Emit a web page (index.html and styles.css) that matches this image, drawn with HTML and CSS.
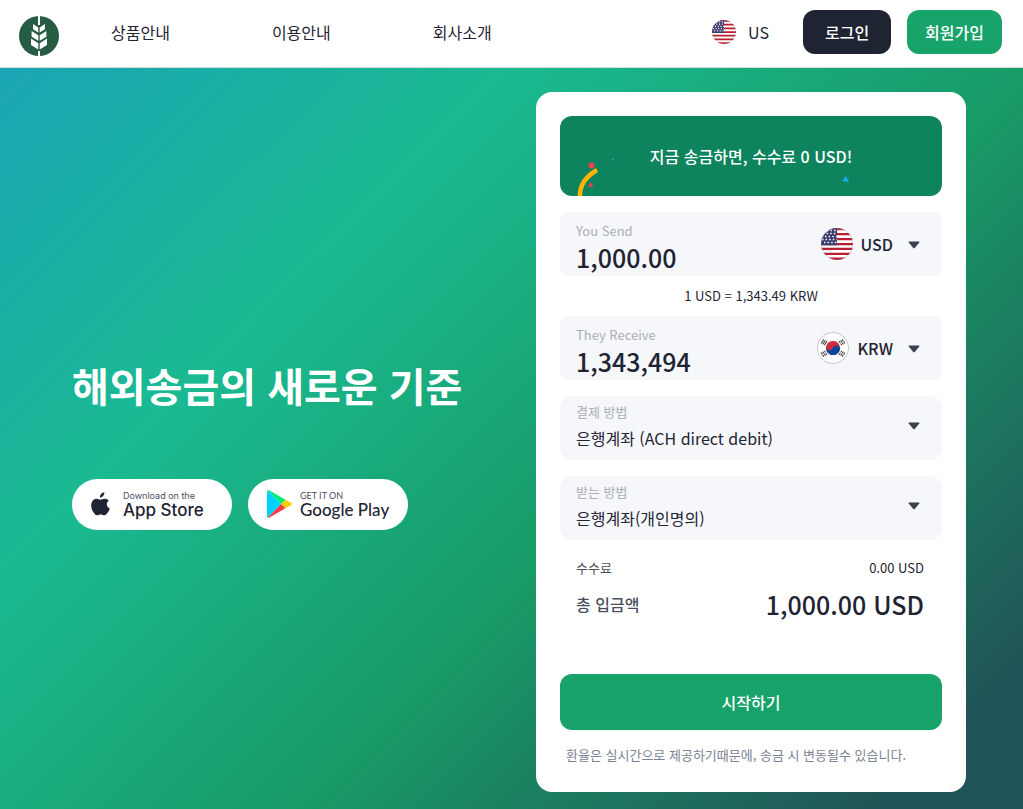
FILE: index.html
```html
<!DOCTYPE html>
<html lang="ko">
<head>
<meta charset="utf-8">
<meta name="viewport" content="width=device-width, initial-scale=1">
<title>해외송금의 새로운 기준</title>
<link rel="stylesheet" href="styles.css">
</head>
<body>
<svg class="defs" width="0" height="0" aria-hidden="true">
  <defs>
    <clipPath id="round"><circle cx="16" cy="16" r="16"/></clipPath>
    <symbol id="flag-us" viewBox="0 0 32 32">
      <g clip-path="url(#round)">
        <path fill="#fff" d="M0 0h32v32H0z"/>
        <path fill="#b9202f" d="M0 0h32v2.2H0zM0 5h32v2.3H0zM0 10h32v2.2H0zM0 14.9h32v2.3H0zM0 19.8h32v2.3H0zM0 24.7h32V27H0zM0 29.6h32V32H0z"/>
        <path fill="#3c3b6e" d="M0 0h16v17.2H0z"/>
        <path d="M6 2.5h10M2 5.5h14M4 8.5h12M1 11.5h15M3 14.5h13" stroke="#fff" stroke-width="1.4" stroke-dasharray="1.5 2.1"/>
      </g>
      <circle cx="16" cy="16" r="15.7" fill="none" stroke="#8d8d9b" stroke-opacity=".5" stroke-width=".6"/>
    </symbol>
    <symbol id="flag-kr" viewBox="0 0 32 32">
      <circle cx="16" cy="16" r="15.6" fill="#fff" stroke="#bcbcc0" stroke-width=".8"/>
      <g transform="rotate(20 16 16)">
        <circle cx="16" cy="16" r="7.1" fill="#cd2e3a"/>
        <path fill="#0047a0" d="M8.9 16a3.55 3.55 0 0 0 7.1 0 3.55 3.55 0 0 1 7.1 0 7.1 7.1 0 0 1-14.2 0z"/>
      </g>
      <g stroke="#444" stroke-width="1.1">
        <path d="M4 11.5l2.8-4.2M5.6 12.4l2.8-4.2M7.2 13.3L10 9.1"/>
        <path d="M28 11.5l-2.8-4.2M26.4 12.4l-2.8-4.2M24.8 13.3L22 9.1" stroke-dasharray="2.2 .6"/>
        <path d="M4 20.5l2.8 4.2M5.6 19.6l2.8 4.2M7.2 18.7l2.8 4.2" stroke-dasharray="2.2 .6"/>
        <path d="M28 20.5l-2.8 4.2M26.4 19.6l-2.8 4.2M24.8 18.7L22 22.9" stroke-dasharray="2.2 .6"/>
      </g>
    </symbol>
    <symbol id="caret" viewBox="0 0 12 8"><path fill="#3b404d" d="M1.2.5h9.6q1.2 0 .5 1L6.7 7q-.7.8-1.4 0L.7 1.5Q0 .5 1.2.5z"/></symbol>
  </defs>
</svg>

<header class="header">
  <a class="logo" href="#" aria-label="홈">
    <svg width="40" height="40" viewBox="0 0 40 40" aria-hidden="true">
      <circle cx="20" cy="20" r="20" fill="#265c43"/>
      <path fill="#fff" d="M19 0h2v9h-2zM19 35h2v5h-2z"/>
      <path fill="#fff" d="M19.3 16.5l-5.2-3.2V8l5.2 3.5zM20.7 16.5l5.2-3.2V8l-5.2 3.5zM19.3 24.7l-6.7-4V15l6.7 4.3zM20.7 24.7l6.7-4V15l-6.7 4.3zM19.3 33.5L12 29v-6.5l7.3 4.7zM20.7 33.5L28 29v-6.5l-7.3 4.7z"/>
    </svg>
  </a>
  <nav class="nav">
    <a href="#">상품안내</a>
    <a href="#">이용안내</a>
    <a href="#">회사소개</a>
  </nav>
  <div class="actions">
    <button class="country" type="button"><svg width="24" height="24" aria-hidden="true"><use href="#flag-us"/></svg>US</button>
    <button class="btn btn-dark" type="button">로그인</button>
    <button class="btn btn-green" type="button">회원가입</button>
  </div>
</header>

<main class="hero">
  <section class="intro">
    <h1>해외송금의 새로운 기준</h1>
    <div class="stores">
      <a class="store" href="#">
        <svg width="19" height="24" viewBox="0 0 19 24" aria-hidden="true"><path fill="#1f2433" d="M13.3.2c.2 1.5-.4 2.9-1.2 3.9-.8 1-2 1.6-3.1 1.5-.2-1.5.5-2.9 1.2-3.7.8-1 2.1-1.6 3.1-1.7zM17.9 8.800c-1.500 1-2.100 2.100-2.100 3.500 0 1.900 1.100 3.300 3 4.100-.5 1.500-1.200 2.900-2.100 4.200-.9 1.400-1.900 2.700-3.300 2.700-1.500 0-2-.8-3.700-.8s-2.300.8-3.600.8c-1.500 0-2.600-1.300-3.500-2.700C.3 17.500-.5 13.300.8 10.200 1.700 8.100 3.400 6.800 5.300 6.800c1.600 0 2.900.9 4 .9s2.600-1 4.500-1c1.600 0 3.100.6 4.100 2.100z"/></svg>
        <span class="store-text store-apple"><small>Download on the</small><b>App Store</b></span>
      </a>
      <a class="store" href="#">
        <svg width="25" height="28" viewBox="0 0 25 28" aria-hidden="true">
          <path fill="#00d2ff" d="M.7.4Q0 .8 0 2v24q0 1.200.7 1.600L14.200 14z"/>
          <path fill="#00ee76" d="M.7.4Q1.500 0 2.500.6L18.500 9.700 14.200 14z"/>
          <path fill="#ff3a44" d="M.7 27.600q.8.400 1.800-.2l16-9.100L14.200 14z"/>
          <path fill="#ffce00" d="M18.500 9.700l5.400 3.100q2.100 1.200 0 2.400l-5.400 3.100L14.200 14z"/>
        </svg>
        <span class="store-text store-google"><small>GET IT ON</small><b>Google Play</b></span>
      </a>
    </div>
  </section>

  <form class="card">
    <div class="promo">
      <svg class="confetti" viewBox="0 0 382 80" aria-hidden="true">
        <path d="M20 82C19 70 25 61 37 54" fill="none" stroke="#ffb400" stroke-width="4.5"/>
        <circle cx="31.5" cy="49.5" r="3" fill="#ef4050"/>
        <path d="M30.5 66l3 4.500-5.500.5z" fill="#ef4050"/>
        <path d="M286 60l3 6-7-1z" fill="#1eaaf1"/>
        <circle cx="53" cy="43.5" r="1" fill="#2aa5c8"/>
        <circle cx="105" cy="51" r="1" fill="#70569c"/>
      </svg>
      <p>지금 송금하면, 수수료 0 USD!</p>
    </div>

    <div class="field">
      <div class="amount">
        <label for="send">You Send</label>
        <input id="send" type="text" inputmode="decimal" value="1,000.00">
      </div>
      <button class="currency" type="button"><svg width="32" height="32" aria-hidden="true"><use href="#flag-us"/></svg>USD<svg class="caret" width="12" height="8" aria-hidden="true"><use href="#caret"/></svg></button>
    </div>
    <p class="rate">1 USD = 1,343.49 KRW</p>
    <div class="field">
      <div class="amount">
        <label for="receive">They Receive</label>
        <input id="receive" type="text" inputmode="decimal" value="1,343,494">
      </div>
      <button class="currency" type="button"><svg width="32" height="32" aria-hidden="true"><use href="#flag-kr"/></svg>KRW<svg class="caret" width="12" height="8" aria-hidden="true"><use href="#caret"/></svg></button>
    </div>

    <div class="field method">
      <div class="choice">
        <label for="pay">결제 방법</label>
        <select id="pay"><option>은행계좌 (ACH direct debit)</option></select>
      </div>
      <svg class="caret" width="12" height="8" aria-hidden="true"><use href="#caret"/></svg>
    </div>
    <div class="field method">
      <div class="choice">
        <label for="payout">받는 방법</label>
        <select id="payout"><option>은행계좌(개인명의)</option></select>
      </div>
      <svg class="caret" width="12" height="8" aria-hidden="true"><use href="#caret"/></svg>
    </div>

    <dl class="summary">
      <div class="fee"><dt>수수료</dt><dd>0.00 USD</dd></div>
      <div class="total"><dt>총 입금액</dt><dd>1,000.00 USD</dd></div>
    </dl>
    <button class="start" type="submit">시작하기</button>
    <p class="note">환율은 실시간으로 제공하기때문에, 송금 시 변동될수 있습니다.</p>
  </form>
</main>
</body>
</html>
```
FILE: styles.css
```css
* { box-sizing: border-box; }
body {
  margin: 0;
  min-height: 100vh;
  display: flex;
  flex-direction: column;
  font-family: "Noto Sans CJK KR", "Noto Sans", sans-serif;
  font-size: 16px;
  line-height: 24px;
  color: #1f2433;
}
h1, p, dl, dd { margin: 0; }
button, input, select { font: inherit; color: inherit; border: 0; background: none; padding: 0; }
button { cursor: pointer; }
a { color: inherit; text-decoration: none; }
svg { display: block; flex: none; }
.defs { position: absolute; }

.header {
  display: flex;
  align-items: center;
  height: 68px;
  padding: 0 21px 4px 19px;
  border-bottom: 1px solid #d5dbdb;
  background: #fff;
}
.logo { padding-top: 8px; }
.nav { display: flex; gap: 102px; margin-left: 52px; padding-top: 1px; }
.actions { display: flex; align-items: center; gap: 16px; margin-left: auto; }
.country { display: flex; align-items: center; gap: 12px; margin-right: 18px; }
.btn { height: 44px; border-radius: 12px; padding: 0 18px; color: #fff; font-weight: 500; }
.btn-dark { background: #1f2432; padding: 0 22px; }
.btn-green { background: #18a36a; }

.hero {
  flex: 1;
  display: flex;
  align-items: flex-start;
  justify-content: space-between;
  gap: 24px;
  padding: 24px 57px 17px 72px;
  background: linear-gradient(135deg, #1ba5b5 0%, #1aba91 29%, #189a66 59%, #205357 92%);
}
.intro { align-self: center; color: #fff; }
h1 { font-size: 40px; line-height: 60px; font-weight: 700; white-space: nowrap; }
.stores { display: flex; gap: 16px; margin-top: 64px; }
.store {
  display: flex;
  align-items: center;
  width: 160px;
  height: 51px;
  padding-left: 19px;
  border-radius: 26px;
  background: #fff;
  color: #1f2433;
}
.store-text { display: flex; flex-direction: column; padding-top: 2px; white-space: nowrap; }
.store-text b { font-weight: 500; font-size: 17px; line-height: 18px; }
.store-text small { font-size: 9px; line-height: 10px; color: #4a4f5e; }
.store-apple { margin-left: 13px; font-family: Inter, sans-serif; }
.store-google { margin-left: 8px; font-family: Lato, sans-serif; }

.card { flex: 0 1 430px; padding: 24px; border-radius: 16px; background: #fff; }
.promo {
  position: relative;
  display: grid;
  place-items: center;
  height: 80px;
  margin-bottom: 16px;
  border-radius: 12px;
  overflow: hidden;
  background: #0d845d;
  color: #fff;
  font-weight: 500;
}
.promo p { position: relative; }
.confetti { position: absolute; left: 0; top: 0; width: 100%; }
.field {
  display: flex;
  align-items: center;
  justify-content: space-between;
  height: 64px;
  padding: 0 22px 0 16px;
  border-radius: 8px;
  background: #f6f7fb;
}
.field label { display: block; font-size: 13px; line-height: 20px; color: #acaeb6; }
.amount { flex: 1; min-width: 0; padding-top: 5px; }
.amount input { display: block; width: 100%; height: 32px; font-size: 25px; font-weight: 500; }
.currency { display: flex; align-items: center; gap: 8px; font-weight: 500; }
.currency .caret { margin: 2px 0 0 7px; }
.rate { font-size: 13px; line-height: 40px; text-align: center; }
.method { margin-top: 16px; border-radius: 12px; }
.choice { flex: 1; }
.choice select { appearance: none; display: block; width: 100%; height: 32px; }
.method .caret { margin-bottom: 4px; pointer-events: none; }

.summary { padding: 16px 18px 0 16px; }
.summary div { display: flex; justify-content: space-between; align-items: center; }
.fee { font-size: 13px; }
.total { margin-top: 6px; }
.summary dt { color: #4a4f5e; }
.total dt { font-weight: 500; }
.total dd { font-size: 25px; line-height: 36px; font-weight: 500; }
.start {
  width: 100%;
  height: 56px;
  margin-top: 52px;
  border-radius: 12px;
  background: #18a36a;
  color: #fff;
  font-weight: 500;
}
.note { margin: 12px 0 0 6px; font-size: 13px; line-height: 26px; color: #7d8295; }
```
